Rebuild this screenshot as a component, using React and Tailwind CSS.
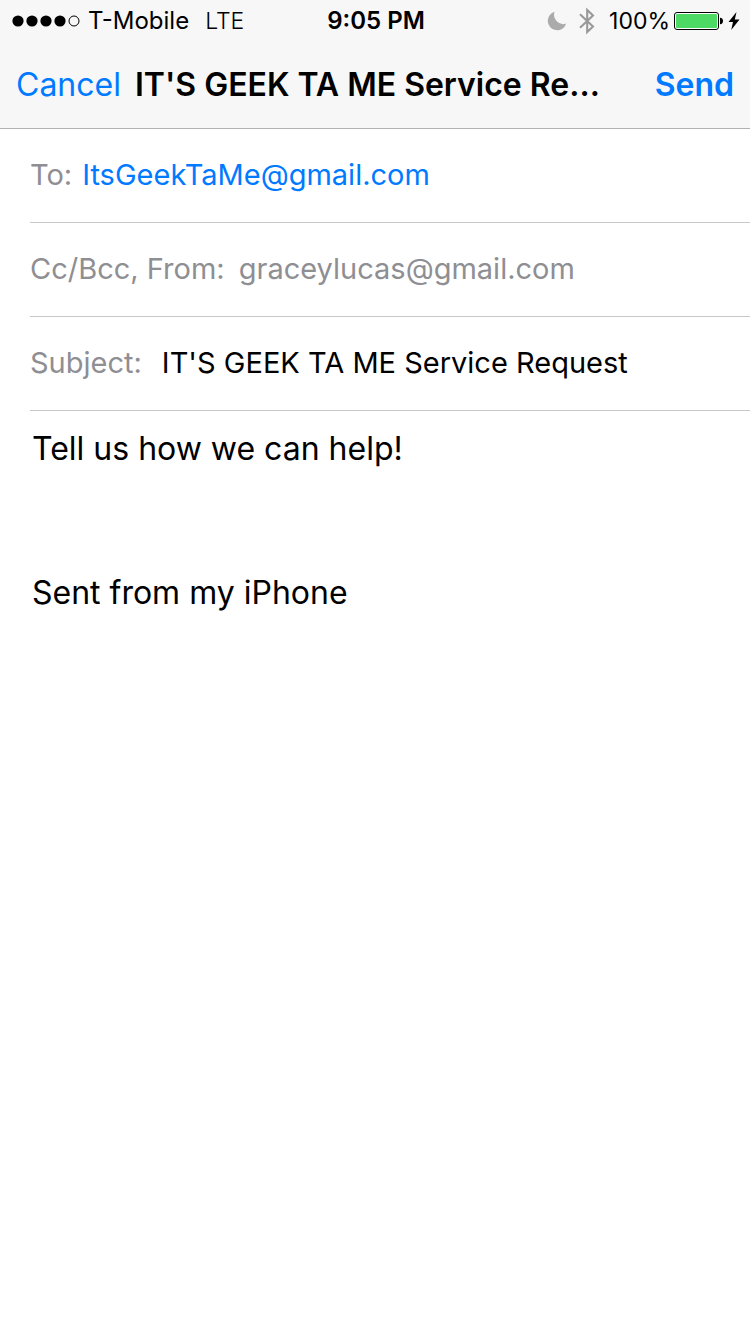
import React from "react";

function SignalDots() {
  return (
    <svg role="img" aria-label="Signal strength: 4 of 5" className="h-3 w-[68px] shrink-0" viewBox="0 0 68 12">
      <circle cx="6" cy="6" r="5.6" />
      <circle cx="20" cy="6" r="5.6" />
      <circle cx="34" cy="6" r="5.6" />
      <circle cx="48" cy="6" r="5.6" />
      <circle cx="62" cy="6" r="5" fill="none" stroke="#000" strokeWidth="1" />
    </svg>
  );
}

function MoonIcon() {
  return (
    <svg role="img" aria-label="Do not disturb" className="h-5 w-5 shrink-0" viewBox="0 0 20 20">
      <path d="M7.6 0.8A9.4 9.4 0 1 0 19.2 12.6A9.2 9.2 0 0 1 7.6 0.8Z" fill="#ababab" />
    </svg>
  );
}

function BluetoothIcon() {
  return (
    <svg role="img" aria-label="Bluetooth" className="h-7 w-4 shrink-0" viewBox="0 0 16 28">
      <path d="M1 7.3L14 19.6L8.2 25V3L14 8.4L1 20.7" fill="none" stroke="#999" strokeWidth="2.1" />
    </svg>
  );
}

function BatteryIcon() {
  return (
    <svg role="img" aria-label="Battery full" className="h-5 w-[50px] shrink-0" viewBox="0 0 50 20">
      <rect x="0.5" y="1.5" width="44" height="17" rx="2.5" fill="#fff" stroke="#000" />
      <rect x="2" y="3" width="41" height="14" rx="1" fill="#4cd964" />
      <path d="M46 6.7C48.2 6.7 49 8.1 49 10S48.2 13.3 46 13.3Z" />
    </svg>
  );
}

function ChargingIcon() {
  return (
    <svg role="img" aria-label="Charging" className="h-5 w-3 shrink-0" viewBox="0 0 12 20">
      <path d="M8.5 1L0.5 11H5L3.2 19L11.5 8.5H6.8Z" />
    </svg>
  );
}

function StatusBar() {
  return (
    <div className="grid h-[42px] grid-cols-[1fr_auto_1fr] items-center pr-2.5 pl-3 text-2xl">
      <div className="flex items-center gap-2">
        <SignalDots />
        <span>T-Mobile</span>
        <span className="ml-2 text-[23px] font-light">LTE</span>
      </div>
      <time className="font-semibold">9:05 PM</time>
      <div className="flex items-center justify-end">
        <MoonIcon />
        <span className="ml-3 flex"><BluetoothIcon /></span>
        <span className="mr-1 ml-3.5 text-[23px]">100%</span>
        <BatteryIcon />
        <span className="ml-1 flex"><ChargingIcon /></span>
      </div>
    </div>
  );
}

function Field({ id, label, gap, type = "text", value, color }) {
  return (
    <div className={`flex h-[94px] items-center border-b border-[#c8c7cc] pb-0.5 text-[29px] ${gap}`}>
      <label htmlFor={id} className="shrink-0 text-[#8e8e93]">{label}</label>
      <input id={id} type={type} defaultValue={value} className={`min-w-0 flex-1 bg-transparent outline-none ${color}`} />
    </div>
  );
}

export default function App() {
  return (
    <div className="flex min-h-screen flex-col bg-white font-['Inter',sans-serif] text-black">
      <header className="border-b border-[#b2b2b2] bg-[#f7f7f7]">
        <StatusBar />
        <div className="flex h-[86px] items-center justify-between px-4 text-[32px]">
          <div className="flex min-w-0 items-center gap-3.5">
            <button type="button" className="shrink-0 text-[#007aff]">Cancel</button>
            <h1 className="min-w-0 truncate font-semibold">IT'S GEEK TA ME Service Re...</h1>
          </div>
          <button type="button" className="ml-4 shrink-0 font-semibold text-[#007aff]">Send</button>
        </div>
      </header>
      <form className="flex flex-1 flex-col">
        <div className="pl-[30px]">
          <Field id="to" label="To:" type="email" gap="gap-2.5" value="ItsGeekTaMe@gmail.com" color="text-[#007aff]" />
          <Field id="from" label="Cc/Bcc, From:" type="email" gap="gap-3.5" value="graceylucas@gmail.com" color="text-[#8e8e93]" />
          <Field id="subject" label="Subject:" gap="gap-5" value="IT'S GEEK TA ME Service Request" color="text-black" />
        </div>
        <textarea
          aria-label="Message"
          className="w-full flex-1 resize-none bg-transparent px-8 pt-3.5 text-[32px] leading-[48px] outline-none"
          defaultValue={"Tell us how we can help!\n\n\nSent from my iPhone"}
        />
      </form>
    </div>
  );
}
